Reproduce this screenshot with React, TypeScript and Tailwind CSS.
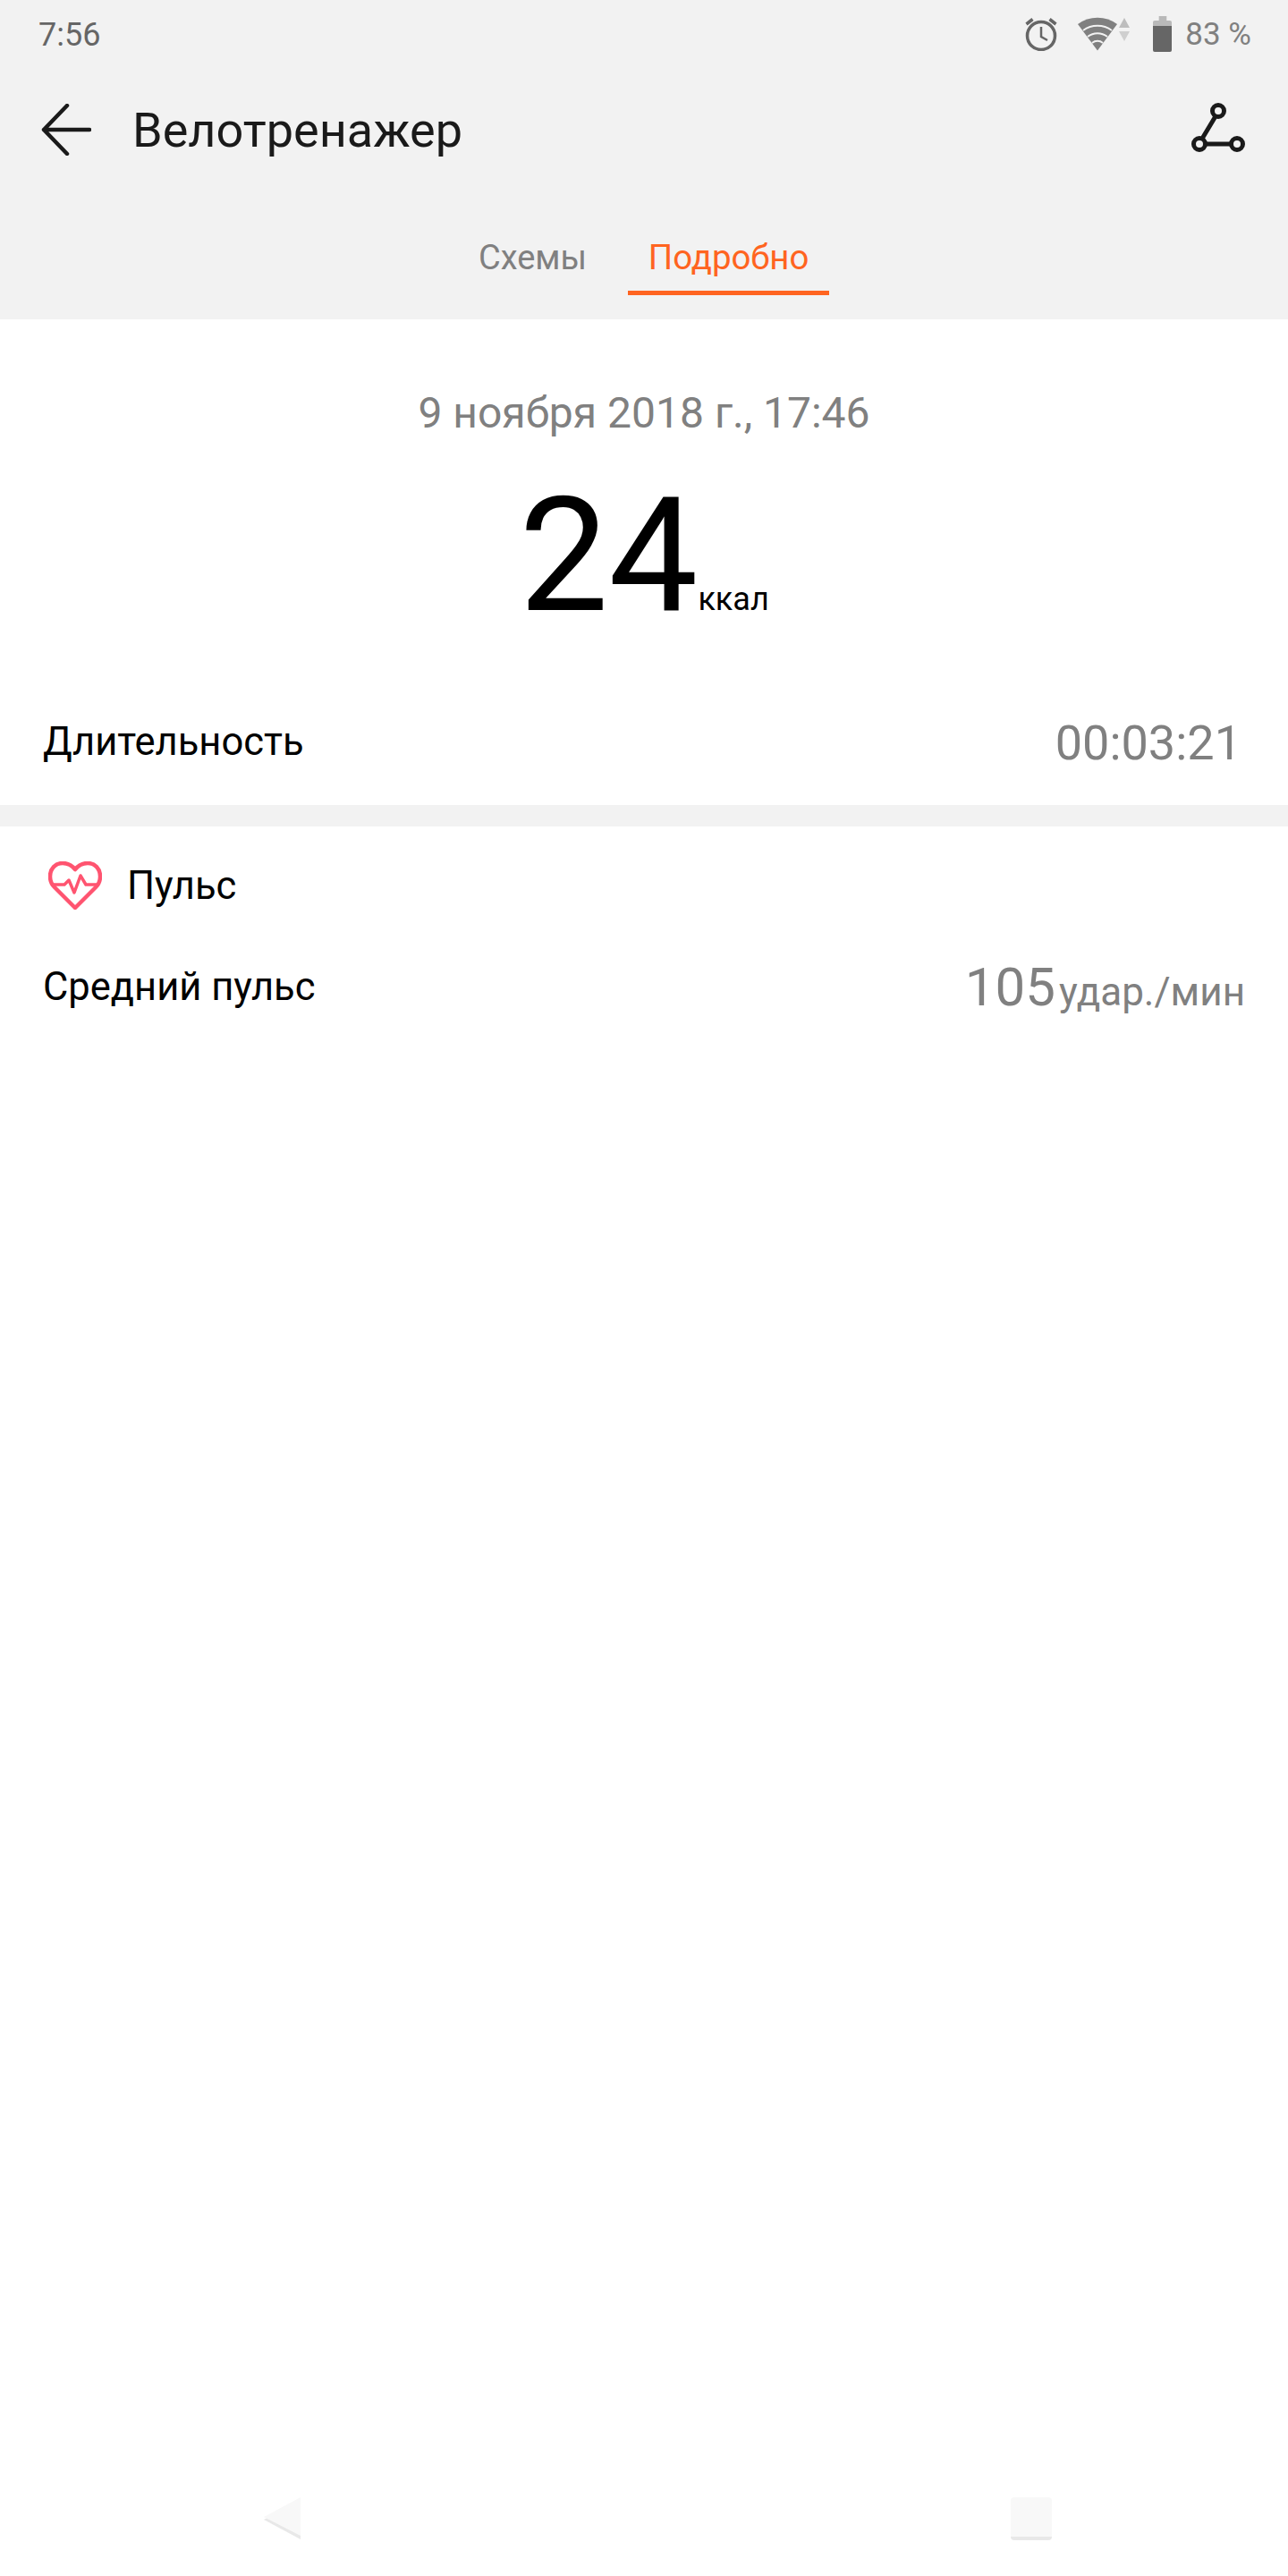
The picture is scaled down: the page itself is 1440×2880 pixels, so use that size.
const font = { fontFamily: "Roboto, 'Noto Sans', sans-serif" };

function AlarmIcon() {
  return (
    <svg width="36" height="38" viewBox="0 0 36 38" fill="none" stroke="#666666">
      <circle cx="18" cy="21" r="15.5" strokeWidth="3.5" />
      <path d="M18 11v11l7 4" strokeWidth="2.5" />
      <path d="M1.5 8 8.5 2.5M34.5 8l-7-5.5" strokeWidth="3.5" />
    </svg>
  );
}

function WifiIcon() {
  return (
    <svg width="58" height="38" viewBox="0 0 58 38">
      <path d="M22 37.5 0 8A37 37 0 0 1 44 8Z" fill="#808080" />
      <g fill="none" stroke="#f2f2f2" strokeWidth="2">
        <path d="M6 15A27 27 0 0 1 38 15" />
        <path d="M11 22A18 18 0 0 1 33 22" />
        <path d="M16 29A9.5 9.5 0 0 1 28 29" />
      </g>
      <path d="M52 1 58 12H46Z" fill="#bdbdbd" />
      <path d="M46 16H58L52 27Z" fill="#cfcfcf" />
    </svg>
  );
}

function BatteryIcon() {
  return (
    <svg width="21" height="40" viewBox="0 0 22 40" preserveAspectRatio="none">
      <path d="M7 0h9v5h4a2 2 0 0 1 2 2v5H0V7a2 2 0 0 1 2-2h5Z" fill="#b9b9b9" />
      <path d="M0 11h22v27a2 2 0 0 1-2 2H2a2 2 0 0 1-2-2Z" fill="#666666" />
    </svg>
  );
}

function BackArrow() {
  return (
    <svg width="56" height="58" viewBox="0 0 56 58" fill="none" stroke="#1a1a1a" strokeWidth="4.5" strokeLinecap="round" strokeLinejoin="round">
      <path d="M54 29H3M29 2 3 29l26 27" />
    </svg>
  );
}

function RouteIcon() {
  return (
    <svg width="60" height="60" viewBox="0 0 60 60" fill="none" stroke="#1a1a1a" strokeWidth="5">
      <circle cx="30" cy="9" r="6.5" />
      <circle cx="9" cy="46" r="6.5" />
      <circle cx="51" cy="46" r="6.5" />
      <path d="M27 15 12 40M15.5 46h29" />
    </svg>
  );
}

function HeartIcon() {
  return (
    <svg width="60" height="54" viewBox="0 0 60 54" fill="none" stroke="#ff5470" strokeWidth="4.5" strokeLinejoin="round">
      <path d="M30 9C26 4 21 2 16 2 8 2 2 8 2 17c0 5 2 9 5 12l23 23 23-23c3-3 5-7 5-12 0-9-6-15-14-15-5 0-10 2-14 7Z" />
      <path d="M4 26h14l5-5 6 14 7-19 6 10h14" strokeWidth="3.5" />
    </svg>
  );
}

export default function App() {
  return (
    <div className="flex flex-col min-h-[2880px] bg-white" style={font}>
      {/* Header */}
      <div className="bg-[#f2f2f2] h-[357px]">
        <div className="flex items-center justify-between h-[78px] pl-[43px] pr-[41px]">
          <span className="text-[36px] text-[#666666]">7:56</span>
          <div className="flex items-center">
            <div className="-mt-[3px] flex items-center">
              <AlarmIcon />
              <div className="ml-[23px]"><WifiIcon /></div>
              <div className="ml-[26px]"><BatteryIcon /></div>
            </div>
            <span className="ml-[15px] text-[35px] text-[#808080]">83 %</span>
          </div>
        </div>
        <div className="flex items-center justify-between h-[134px] pl-[46px] pr-[48px]">
          <div className="flex items-center">
            <BackArrow />
            <span className="ml-[46px] text-[54px] text-[#1a1a1a]">Велотренажер</span>
          </div>
          <RouteIcon />
        </div>
        <div className="flex pl-[512px] gap-[23px]">
          <div className="flex items-center px-[23px] h-[118px] pt-[39px] border-b-[5px] border-transparent">
            <span className="text-[38px] text-[#808080]">Схемы</span>
          </div>
          <div className="flex items-center justify-center w-[225px] h-[118px] pt-[39px] border-b-[5px] border-[#ff6420]">
            <span className="text-[38.4px] text-[#ff6420]">Подробно</span>
          </div>
        </div>
      </div>

      {/* Summary */}
      <div className="flex flex-col items-center pt-[75px]">
        <span className="text-[48px] leading-[60px] text-[#808080]">9 ноября 2018 г., 17:46</span>
        <div className="flex items-baseline mt-[29px] h-[200px]">
          <span className="text-[178px] leading-[200px] text-black">24</span>
          <span className="text-[36px] text-black">ккал</span>
        </div>
      </div>
      <div className="flex items-center justify-between h-[140px] mt-[39px] pl-[48px] pr-[52px]">
        <span className="text-[43.5px] text-black">Длительность</span>
        <span className="text-[54px] text-[#808080]">00:03:21</span>
      </div>

      <div className="h-[24px] bg-[#f2f2f2]" />

      {/* Heart rate */}
      <div className="flex items-center h-[134px] pl-[54px]">
        <div className="-mt-[3px]"><HeartIcon /></div>
        <span className="ml-[28px] text-[43.5px] text-black">Пульс</span>
      </div>
      <div className="flex items-center justify-between mt-[1px] pl-[48px] pr-[48px]">
        <span className="text-[43.5px] leading-[90px] text-black">Средний пульс</span>
        <div className="flex items-baseline">
          <span className="text-[60px] leading-[90px] text-[#808080]">105</span>
          <span className="ml-[4px] text-[44px] text-[#808080]">удар./мин</span>
        </div>
      </div>

      <div className="flex-1" />

      {/* Navigation bar */}
      <div className="flex justify-between pl-[294px] pr-[264px] pb-[40px]">
        <svg width="44" height="48" viewBox="0 0 44 48">
          <path d="M42 3v44L1 25Z" fill="#e8e8e8" />
          <path d="M42 0v43L1 22Z" fill="#f8f8f8" />
        </svg>
        <div className="w-[46px] h-[48px] rounded-[4px] bg-[#f8f8f8] border-b-[4px] border-[#e8e8e8]" />
      </div>
    </div>
  );
}
